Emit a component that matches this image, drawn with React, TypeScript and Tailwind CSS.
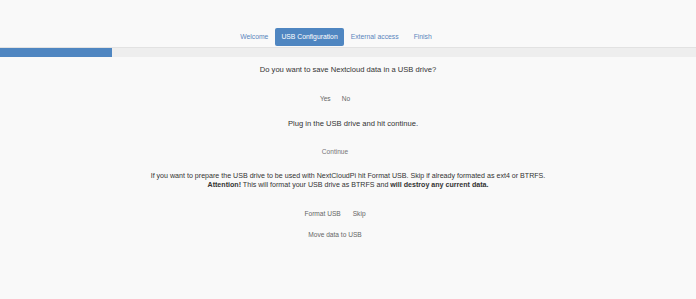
import React from 'react';

const tabs = ['Welcome', 'USB Configuration', 'External access', 'Finish'];

const App: React.FC = () => {
  const active = 1;
  const progress = 16.1;

  return (
    <div className="min-h-[299px] w-full bg-[#f9f9f9] font-['Liberation_Sans',Arial,sans-serif] text-[#333] text-[7.6px] leading-[9px]">
      {/* Tabs */}
      <div className="flex justify-center items-center pt-[26px] pr-[24px] h-[47px] text-[6.8px]">
        {tabs.map((t, i) => (
          <div
            key={t}
            className={
              i === active
                ? 'px-[6px] h-[18px] mx-[7px] flex items-center rounded-[2px] bg-[#4f86c1] text-white'
                : i === 3
                ? 'h-[18px] ml-[15px] flex items-center text-[#5a86bd]'
                : 'h-[18px] flex items-center text-[#5a86bd]'
            }
          >
            {t}
          </div>
        ))}
      </div>

      {/* Progress */}
      <div className="h-[10px] bg-[#eeeeee] border-t border-[#e2e2e2]">
        <div className="h-full bg-[#4f86c1]" style={{ width: `${progress}%` }} />
      </div>

      {/* Content */}
      <div className="flex flex-col items-center text-center">
        <p className="mt-[8px]">Do you want to save Nextcloud data in a USB drive?</p>
        <div className="flex gap-[11px] mt-[20px] pr-[26px] text-[#666] text-[6.6px]">
          <span>Yes</span>
          <span>No</span>
        </div>
        <p className="mt-[16px] pl-[10px]">Plug in the USB drive and hit continue.</p>
        <div className="mt-[19px] pr-[26px] text-[#777] text-[6.6px]">Continue</div>
        <p className="mt-[16px] text-[7.1px]">
          If you want to prepare the USB drive to be used with NextCloudPi hit Format USB. Skip if already formated as ext4 or BTRFS.
          <br />
          <b>Attention!</b> This will format your USB drive as BTRFS and <b>will destroy any current data.</b>
        </p>
        <div className="flex gap-[12px] mt-[19px] pr-[26px] text-[#666] text-[6.6px]">
          <span>Format USB</span>
          <span>Skip</span>
        </div>
        <div className="mt-[12px] pr-[26px] text-[#666] text-[6.6px]">Move data to USB</div>
      </div>
    </div>
  );
};

export default App;
